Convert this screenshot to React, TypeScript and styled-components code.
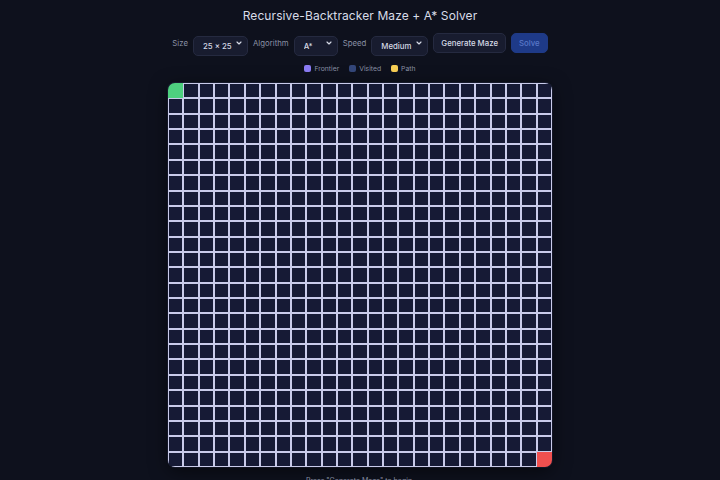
import styled, { createGlobalStyle } from "styled-components";
import { ChevronDown } from "lucide-react";

const GlobalStyle = createGlobalStyle`
  html, body {
    margin: 0;
    padding: 0;
    background: #0e111d;
    font-family: Inter, "Noto Sans", "Liberation Sans", sans-serif;
  }
`;

const Page = styled.div`
  display: flex;
  flex-direction: column;
  align-items: center;
  width: 720px;
  height: 480px;
  overflow: hidden;
  background: #0e111d;
  color: #d6dae6;
  & > * {
    flex-shrink: 0;
  }
`;

const Title = styled.h1`
  margin: 6px 0 0 0;
  font-size: 12px;
  line-height: 20px;
  font-weight: 400;
  color: #d8dce8;
  letter-spacing: 0.1px;
`;

const Controls = styled.div`
  display: flex;
  align-items: center;
  gap: 5px;
  margin-top: 7px;
  height: 20px;
`;

const Label = styled.span`
  font-size: 7.8px;
  color: #8990a4;
`;

const SelectWrap = styled.div<{ $w: number }>`
  position: relative;
  width: ${(p) => p.$w}px;
  height: 20px;
  svg {
    position: absolute;
    right: 5px;
    top: 6px;
    color: #d6dae6;
    pointer-events: none;
  }
`;

const Select = styled.select`
  appearance: none;
  width: 100%;
  height: 100%;
  box-sizing: border-box;
  padding: 0 0 0 9px;
  background: #181c2f;
  border: 1px solid #252a40;
  border-radius: 5px;
  color: #d6dae6;
  font-family: inherit;
  font-size: 7.8px;
  font-weight: 500;
  outline: none;
`;

const Button = styled.button<{ $primary?: boolean }>`
  height: 20px;
  box-sizing: border-box;
  padding: 0 7px;
  border-radius: 5px;
  font-family: inherit;
  font-size: 7.8px;
  font-weight: 500;
  border: 1px solid ${(p) => (p.$primary ? "#1f3a86" : "#252a40")};
  background: ${(p) => (p.$primary ? "#1e3a88" : "#181c2f")};
  color: ${(p) => (p.$primary ? "#5a78c8" : "#d6dae6")};
`;

const Legend = styled.div`
  display: flex;
  align-items: center;
  gap: 10px;
  margin-top: 10px;
  height: 10px;
`;

const LegendItem = styled.div`
  display: flex;
  align-items: center;
  gap: 3px;
  font-size: 6.8px;
  color: #8990a4;
`;

const Swatch = styled.span<{ $c: string }>`
  width: 7px;
  height: 7px;
  border-radius: 2px;
  background: ${(p) => p.$c};
`;

const Board = styled.div`
  margin-top: 10px;
  width: 384px;
  height: 384px;
  display: grid;
  grid-template-columns: repeat(25, 1fr);
  grid-template-rows: repeat(25, 1fr);
  border-radius: 7px;
  overflow: hidden;
  background: #161a35;
  box-shadow: 0 4px 18px rgba(0, 0, 0, 0.55), 0 0 0 1px #1c2036;
`;

const Cell = styled.div<{ $kind?: "start" | "end" }>`
  box-sizing: border-box;
  border: 1px solid #c9cbea;
  background: ${(p) =>
    p.$kind === "start" ? "#4ed07f" : p.$kind === "end" ? "#f0504f" : "#161a35"};
  ${(p) => (p.$kind ? "border-color: transparent;" : "")}
`;

const Status = styled.div`
  margin-top: 9px;
  font-size: 7px;
  color: #8990a4;
`;

const N = 25;

function App() {
  const cells = Array.from({ length: N * N }).map((_, i) => {
    const kind = i === 0 ? "start" : i === N * N - 1 ? "end" : undefined;
    return <Cell key={i} $kind={kind} />;
  });
  return (
    <Page>
      <GlobalStyle />
      <Title>Recursive-Backtracker Maze + A* Solver</Title>
      <Controls>
        <Label>Size</Label>
        <SelectWrap $w={55}>
          <Select defaultValue="25">
            <option value="25">25 × 25</option>
          </Select>
          <ChevronDown size={8} strokeWidth={3.5} />
        </SelectWrap>
        <Label>Algorithm</Label>
        <SelectWrap $w={44}>
          <Select defaultValue="astar">
            <option value="astar">A*</option>
          </Select>
          <ChevronDown size={8} strokeWidth={3.5} />
        </SelectWrap>
        <Label>Speed</Label>
        <SelectWrap $w={57}>
          <Select defaultValue="medium">
            <option value="medium">Medium</option>
          </Select>
          <ChevronDown size={8} strokeWidth={3.5} />
        </SelectWrap>
        <Button>Generate Maze</Button>
        <Button $primary disabled>
          Solve
        </Button>
      </Controls>
      <Legend>
        <LegendItem>
          <Swatch $c="#8b7cf4" />
          Frontier
        </LegendItem>
        <LegendItem>
          <Swatch $c="#34477a" />
          Visited
        </LegendItem>
        <LegendItem>
          <Swatch $c="#f8cf55" />
          Path
        </LegendItem>
      </Legend>
      <Board>{cells}</Board>
      <Status>Press "Generate Maze" to begin.</Status>
    </Page>
  );
}

export default App;
